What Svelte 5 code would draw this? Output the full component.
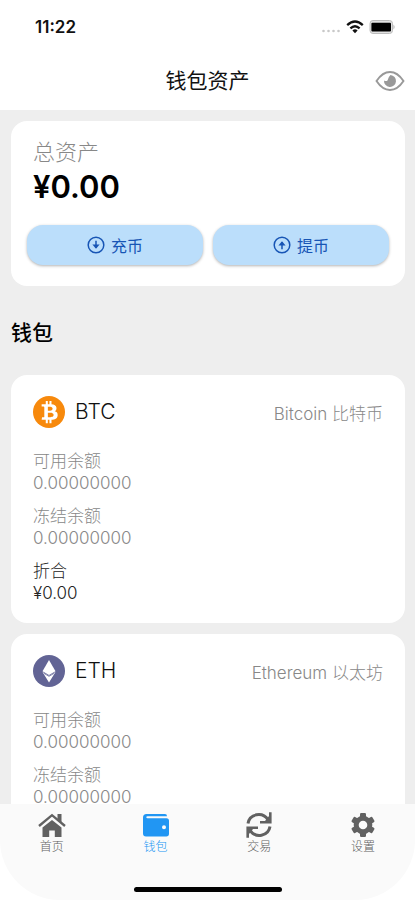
<script lang="ts">
  type Coin = { symbol: string; name: string; available: string; frozen: string; value?: string };
  const coins: Coin[] = [
    { symbol: 'BTC', name: 'Bitcoin 比特币', available: '0.00000000', frozen: '0.00000000', value: '¥0.00' },
    { symbol: 'ETH', name: 'Ethereum 以太坊', available: '0.00000000', frozen: '0.00000000' }
  ];
  const tabs = [
    { id: 'home', label: '首页' },
    { id: 'wallet', label: '钱包' },
    { id: 'trade', label: '交易' },
    { id: 'settings', label: '设置' }
  ];
  let active = $state('wallet');
</script>

<div class="screen">
  <header>
    <div class="status">
      <span class="time">11:22</span>
      <div class="signals">
        <svg width="20" height="16" viewBox="0 0 20 16" fill="#c8c8c8">
          <circle cx="2.5" cy="12" r="1.3" /><circle cx="7.5" cy="12" r="1.3" /><circle cx="12.5" cy="12" r="1.3" /><circle cx="17.5" cy="12" r="1.3" />
        </svg>
        <svg width="18" height="16" viewBox="0 0 18 16" fill="none" stroke="#111" stroke-width="2.3">
          <path d="M1.2 6.2Q9 -1.2 16.8 6.2" /><path d="M4.4 9.4Q9 5 13.6 9.4" />
          <path d="M6.4 11.4Q9 9.3 11.6 11.4L9 14.3Z" fill="#111" stroke="none" />
        </svg>
        <svg width="27" height="16" viewBox="0 0 27 16">
          <rect x="1" y="1.5" width="22.5" height="13" rx="3" fill="#e2e2e2" stroke="#bcbcbc" />
          <rect x="2.4" y="3.800" width="19.6" height="8.6" rx="1" fill="#000" />
          <path d="M24.5 5.5Q26.6 8 24.5 10.5Z" fill="#aaa" />
        </svg>
      </div>
    </div>
    <div class="titlebar">
      <h1>钱包资产</h1>
      <button class="eye" aria-label="显示或隐藏余额">
        <svg width="30" height="22" viewBox="0 0 30 22">
          <path d="M1.5 11Q7.5 2 15 2T28.5 11Q22.5 20 15 20T1.5 11Z" fill="none" stroke="#999" stroke-width="1.9" />
          <path d="M15.500 5A6 6 0 1 1 9 10.500Q11 11.600 12.500 10.500Q13 7.200 15.500 5Z" fill="#999" />
        </svg>
      </button>
    </div>
  </header>

  <main>
    <section class="card total">
      <p class="total-label">总资产</p>
      <p class="total-amount">¥0.00</p>
      <div class="actions">
        <button>
          <svg width="18" height="18" viewBox="0 0 18 18" fill="none" stroke="currentColor" stroke-width="1.5">
            <circle cx="9" cy="9" r="7.8" /><path d="M9 4.800V12" /><path d="M5.4 8.500H12.6L9 12.800Z" fill="currentColor" stroke="none" />
          </svg>
          充币
        </button>
        <button>
          <svg width="18" height="18" viewBox="0 0 18 18" fill="none" stroke="currentColor" stroke-width="1.5">
            <circle cx="9" cy="9" r="7.8" /><path d="M9 13.200V6" /><path d="M5.4 9.500H12.6L9 5.200Z" fill="currentColor" stroke="none" />
          </svg>
          提币
        </button>
      </div>
    </section>

    <h2>钱包</h2>

    <div class="coins">
      {#each coins as coin}
        <article class="card coin">
          <div class="coin-head">
            {#if coin.symbol === 'BTC'}
              <svg width="32" height="32" viewBox="0 0 32 32">
                <circle cx="16" cy="16" r="16" fill="#f7890c" />
                <path fill="#fff" fill-rule="evenodd" d="M23.189 14.020c.314-2.096-1.283-3.223-3.465-3.975l.708-2.840-1.728-.430-.690 2.765c-.454-.114-.920-.220-1.385-.326l.695-2.783L15.596 6l-.708 2.839c-.376-.086-.746-.170-1.104-.260l.002-.009-2.384-.595-.460 1.846s1.283.294 1.256.312c.700.175.826.638.805 1.006l-.806 3.235c.048.012.110.030.180.057l-.183-.045-1.130 4.532c-.086.212-.303.531-.793.410.018.025-1.256-.313-1.256-.313l-.858 1.978 2.250.561c.418.105.828.215 1.231.318l-.715 2.872 1.727.430.708-2.840c.472.127.930.245 1.378.357l-.706 2.828 1.728.430.715-2.866c2.948.558 5.164.333 6.097-2.333.752-2.146-.037-3.385-1.588-4.192 1.130-.260 1.980-1.003 2.207-2.538zm-3.950 5.538c-.533 2.147-4.148.986-5.320.695l.950-3.805c1.172.293 4.929.872 4.370 3.110zm.535-5.569c-.487 1.953-3.495.960-4.470.717l.860-3.450c.975.243 4.118.696 3.610 2.733z" transform="translate(16 16) rotate(-14) scale(1.15) translate(-16 -16)" />
              </svg>
            {:else}
              <svg width="32" height="32" viewBox="0 0 32 32">
                <circle cx="16" cy="16" r="16" fill="#626495" />
                <path d="M16 5L22.5 16.2L16 20L9.5 16.2Z" fill="#fff" />
                <path d="M9.5 17L16 20.8L22.5 17L16 27.5Z" fill="#fff" />
                <path d="M11 18.400L16 21.300L21 18.400" fill="none" stroke="#626495" stroke-width="0.8" />
              </svg>
            {/if}
            <h3>{coin.symbol}</h3>
            <span class="coin-name">{coin.name}</span>
          </div>
          <dl>
            <div><dt>可用余额</dt><dd>{coin.available}</dd></div>
            <div><dt>冻结余额</dt><dd>{coin.frozen}</dd></div>
            {#if coin.value}
              <div class="worth"><dt>折合</dt><dd>{coin.value}</dd></div>
            {/if}
          </dl>
        </article>
      {/each}
    </div>
  </main>

  <nav>
    <div class="tabs">
      {#each tabs as tab}
        <button class:active={active === tab.id} onclick={() => (active = tab.id)}>
          {#if tab.id === 'home'}
            <svg width="28" height="26" viewBox="0 0 28 26">
              <path d="M14 8L23.5 15.6V25H16.8V18.500H11.2V25H4.5V15.6Z" fill="currentColor" />
              <path d="M1 14L14 3.2L27 14" fill="none" stroke="currentColor" stroke-width="2.4" />
              <path d="M19.5 2H23.5V11L19.5 7.7Z" fill="currentColor" />
            </svg>
          {:else if tab.id === 'wallet'}
            <svg width="28" height="26" viewBox="0 0 28 26">
              <path fill="currentColor" fill-rule="evenodd" d="M4.5 2H23Q25 2 25 4.2H5.5Q4.3 4.2 4.3 5.2T5.5 6.2H24.5Q27 6.2 27 8.7V21.8Q27 24.5 24.3 24.5H4Q1 24.500 1 21.5V5.5Q1 2 4.5 2ZM22 13.2A2 2 0 1 0 22 17.2A2 2 0 1 0 22 13.2Z" />
            </svg>
          {:else if tab.id === 'trade'}
            <svg width="28" height="26" viewBox="0 0 28 26" fill="none" stroke="currentColor" stroke-width="3">
              <path d="M3 11.5C4.5 1.800 17.500-.7 23 7.8" /><path d="M15 10.2H25.3V.3" stroke-width="2.6" />
              <path d="M25 14.5C23.5 24.2 10.5 26.7 5 18.2" /><path d="M13 15.8H2.7V25.7" stroke-width="2.6" />
              <path d="M20 9L24 4V9ZM8 17L4 22V17Z" fill="currentColor" stroke="none" />
            </svg>
          {:else}
            <svg width="28" height="26" viewBox="0 0 28 26">
              <g fill="currentColor">
                {#each [0, 60, 120] as turn}
                  <rect x="11" y="1" width="6" height="24" rx="1.2" transform="rotate({turn} 14 13)" />
                {/each}
                <circle cx="14" cy="13" r="9.3" />
              </g>
              <circle cx="14" cy="13" r="4.3" fill="#fafafa" />
            </svg>
          {/if}
          <span>{tab.label}</span>
        </button>
      {/each}
    </div>
    <div class="indicator"></div>
  </nav>
</div>

<style>
  :global(body) { background: #fff; }
  * { box-sizing: border-box; margin: 0; }
  .screen {
    display: flex;
    flex-direction: column;
    height: 100vh;
    font-family: Inter, "Noto Sans CJK SC", sans-serif;
    color: #111;
  }
  button {
    border: 0;
    padding: 0;
    background: none;
    font: inherit;
    color: inherit;
    cursor: pointer;
  }
  svg { display: block; flex: none; }
  header { height: 110px; flex: none; background: #fff; }
  .status {
    display: flex;
    justify-content: space-between;
    align-items: center;
    height: 54px;
    padding: 0 19px 0 35px;
  }
  .time { font-size: 17px; font-weight: 600; }
  .signals { display: flex; align-items: center; gap: 5px; }
  .titlebar {
    display: grid;
    grid-template-columns: 1fr auto 1fr;
    align-items: center;
    height: 54px;
    padding: 0 10px;
  }
  h1 { grid-column: 2; font-size: 21px; font-weight: 400; line-height: 30px; }
  .eye { justify-self: end; }
  main {
    flex: 1;
    min-height: 0;
    overflow-y: auto;
    scrollbar-width: none;
    padding: 11px 10px 11px 11px;
    background: #eee;
  }
  .card { background: #fff; border-radius: 16px; }
  .total { padding: 16px 16px 21px; }
  .total p { padding: 0 6px; }
  .total-label { font-size: 22px; font-weight: 300; line-height: 30px; color: #888; }
  .total-amount { font-size: 31px; font-weight: 600; line-height: 40px; color: #000; }
  .actions { display: flex; gap: 10px; margin-top: 18px; }
  .actions button {
    flex: 1;
    display: flex;
    align-items: center;
    justify-content: center;
    gap: 6px;
    height: 40px;
    border-radius: 16px;
    background: #bbdefb;
    box-shadow: 0 1px 3px rgba(0, 0, 0, 0.3);
    font-size: 16px;
    color: #1755b5;
  }
  h2 { padding: 32px 0 27px; font-size: 21px; font-weight: 500; line-height: 30px; color: #000; }
  .coins { display: flex; flex-direction: column; gap: 11px; }
  .coin { padding: 21px 22px 19px; }
  .coin-head { display: flex; align-items: center; }
  h3 { margin-left: 10px; font-size: 21px; font-weight: 300; line-height: 32px; }
  .coin-name { margin-left: auto; font-size: 17px; font-weight: 300; color: #888; }
  dl {
    display: flex;
    flex-direction: column;
    gap: 11px;
    margin-top: 22px;
    font-size: 17px;
    font-weight: 300;
    line-height: 22px;
    color: #888;
  }
  .worth { color: #222; }
  nav {
    display: flex;
    flex-direction: column;
    justify-content: space-between;
    flex: none;
    height: 96px;
    padding: 8px 0;
    border-radius: 0 0 60px 60px;
    background: #fafafa;
  }
  .tabs { display: flex; }
  .tabs button {
    flex: 1;
    display: flex;
    flex-direction: column;
    align-items: center;
    font-size: 12px;
    line-height: 18px;
    color: #616161;
  }
  .tabs span { font-weight: 300; }
  .tabs .active { color: #2196f3; }
  .indicator { width: 148px; height: 5px; margin: 0 auto; border-radius: 3px; background: #000; }
</style>
